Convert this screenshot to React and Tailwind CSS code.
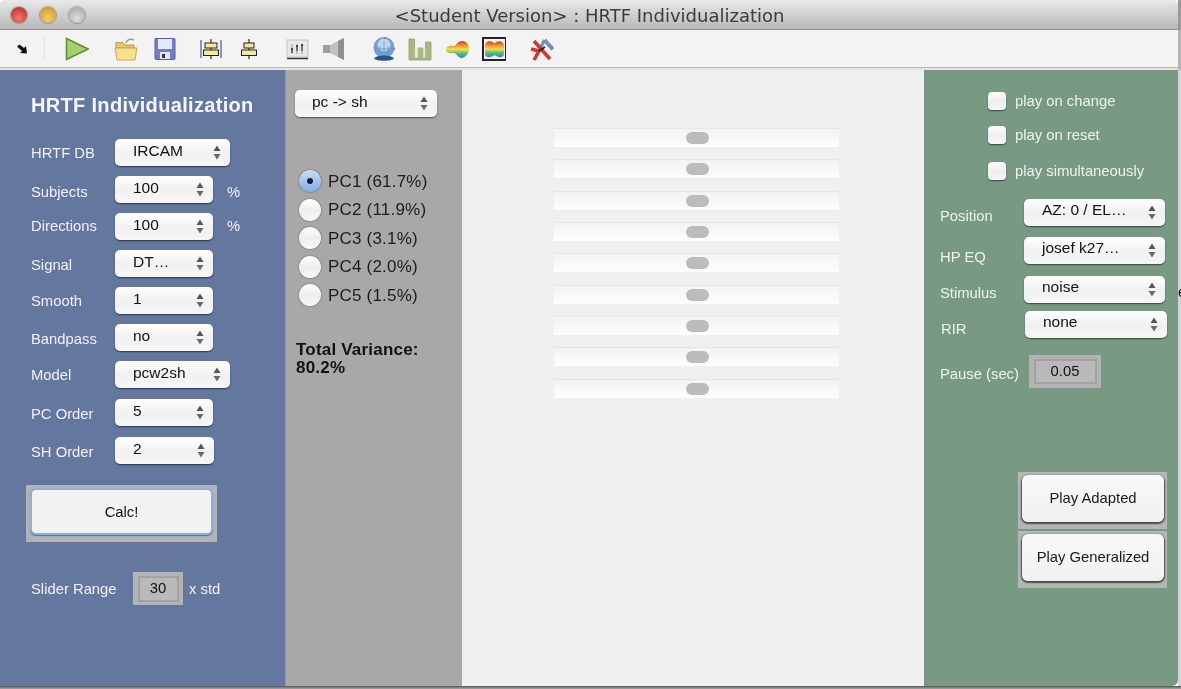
import { useId } from "react";

const FONT = "font-['Liberation_Sans',Arial,sans-serif]";

function Arrows() {
  return (
    <svg width="8" height="15" viewBox="0 0 8 15" className="shrink-0">
      <path d="M4 0.5 L7.5 6 H0.5 Z" fill="#555" />
      <path d="M4 14.5 L7.5 9 H0.5 Z" fill="#6a6a6a" />
    </svg>
  );
}

function Dropdown({ value, className = "w-[98px]", textClass = "pl-[18px]" }) {
  return (
    <div
      className={`h-[27px] rounded-[5px] bg-gradient-to-b from-white via-[#f1f1f1] to-[#f6f6f6] shadow-[0_1px_1.5px_rgba(0,0,0,0.55)] flex items-center justify-between pr-[9px] shrink-0 ${className}`}
    >
      <span className={`text-[15.5px] leading-none text-[#111] -mt-[3px] ${textClass}`}>{value}</span>
      <Arrows />
    </div>
  );
}

function Row({ label, value, width = "w-[98px]", suffix, labelClass = "", suffixClass = "" }) {
  return (
    <div className="flex items-center h-[27px]">
      <span className={`w-[84px] text-[14.8px] text-[#f0f2f6] ${labelClass}`}>{label}</span>
      <Dropdown value={value} className={width} />
      {suffix && <span className={`ml-[14px] text-[14.8px] text-[#f0f2f6] ${suffixClass}`}>{suffix}</span>}
    </div>
  );
}

function Radio({ label, checked }) {
  return (
    <div className="flex items-center h-[28.5px]">
      <span
        className={`w-[22px] h-[22px] rounded-full flex items-center justify-center shadow-[0_0_1.5px_rgba(0,0,0,0.7)] ${
          checked ? "bg-gradient-to-b from-[#c9dcf5] to-[#80aee6]" : "bg-gradient-to-b from-white via-[#ededed] to-[#fafafa]"
        }`}
      >
        {checked && <span className="w-[6px] h-[6px] rounded-full bg-[#10203a]" />}
      </span>
      <span className="ml-[7px] text-[17px] text-[#1c1c1c] tracking-[0.2px]">{label}</span>
    </div>
  );
}

function Check({ label }) {
  return (
    <div className="flex items-center h-[18px] pl-[64px]">
      <span className="w-[18px] h-[18px] rounded-[4px] bg-gradient-to-b from-white via-[#eeeeee] to-[#f8f8f8] shadow-[0_1px_1.5px_rgba(0,0,0,0.55)]" />
      <span className="ml-[9px] text-[14.8px] text-[#eef2ee]">{label}</span>
    </div>
  );
}

function PushButton({ label }) {
  return (
    <div className="w-[149px] h-[57px] bg-[#b4b8b4] pt-[3px] pl-[4px]">
      <button className="w-[142px] h-[47px] rounded-[6px] bg-gradient-to-b from-[#f8f8f8] to-[#f1f1f1] text-[14.8px] text-[#1a1a1a] shadow-[0_1px_1.5px_1px_rgba(0,0,0,0.6)]">
        {label}
      </button>
    </div>
  );
}

function NumBox({ value, outer, inner }) {
  return (
    <div className={`bg-[#b3b3b3] flex items-center justify-center shrink-0 ${outer}`}>
      <div className={`bg-[#b9b9b9] border-2 border-[#a2a2a2] flex items-center justify-center text-[14.8px] text-[#111] ${inner}`}>
        {value}
      </div>
    </div>
  );
}

function SliderRow() {
  return (
    <div className="h-[19px] border-t border-[#e6e6e6] bg-gradient-to-b from-[#f3f3f3] to-[#fdfdfd] flex items-center justify-center pl-[1px]">
      <span className="w-[23px] h-[12px] rounded-full bg-[#bcbcbc]" />
    </div>
  );
}

function Light({ className }) {
  return (
    <span className={`w-[16px] h-[16px] rounded-full shadow-[0_0_1px_1px_rgba(0,0,0,0.25)] ${className}`} />
  );
}

function Icon({ children, ml }) {
  return (
    <svg width="24" height="24" viewBox="0 0 24 24" className={`shrink-0 ${ml}`}>
      {children}
    </svg>
  );
}

function Rainbow({ id }) {
  return (
    <defs>
      <linearGradient id={id} x1="0" y1="0" x2="0" y2="1">
        <stop offset="0" stopColor="#d8342a" />
        <stop offset="0.3" stopColor="#f3a12c" />
        <stop offset="0.5" stopColor="#efe04a" />
        <stop offset="0.72" stopColor="#55c27a" />
        <stop offset="1" stopColor="#3f79d8" />
      </linearGradient>
    </defs>
  );
}

function Blob() {
  const id = useId();
  return (
    <>
      <Rainbow id={id} />
      <path d="M1 12.5 C1 9 5 8 8.5 9 C11 9.5 12 4 17 4 C22 4 24 8.5 24 12 C24 16.5 20 21 16.5 21 C13 21 11.5 16 8.5 16 C5 16.5 1 16 1 12.5 Z" fill={`url(#${id})`} />
    </>
  );
}

function FramedBlob() {
  const id = useId();
  return (
    <>
      <Rainbow id={id} />
      <rect x="1" y="1" width="23" height="22" fill="#f2f2f2" stroke="#222" strokeWidth="2" />
      <path d="M3 9 C3 3 10 3 12.5 6.5 C15 3 22 3 22 9 V17 C22 21 16 21 12.5 18 C9 21 3 21 3 17 Z" fill={`url(#${id})`} />
    </>
  );
}

function Toolbar() {
  return (
    <div className="h-[38px] bg-[#f3f3f3] border-b border-[#b9b9b9] flex items-center pl-[10px] shrink-0">
      {/* arrow */}
      <Icon>
        <path d="M7 9.5 L9.5 7.5 L14 11 L16 9 L17 16.5 L10 16 L12 14 Z" fill="#111" />
      </Icon>
      <span className="ml-[10px] w-px h-[24px] bg-[#e2e2e2]" />
      {/* run */}
      <Icon ml="ml-[20px]">
        <path d="M1.5 1.5 L23 12 L1.5 22.5 Z" fill="#a6cf72" stroke="#5c9230" strokeWidth="1.6" />
      </Icon>
      {/* open */}
      <Icon ml="ml-[25px]">
        <path d="M12 6 C13 2 17 1.5 20 3" fill="none" stroke="#8b9bb0" strokeWidth="1.5" />
        <path d="M2 10 V5.5 H9 L11 8 H20 V11 H2 Z" fill="#e8c566" stroke="#c29e45" />
        <path d="M1 11 H23 L21 23 H3 Z" fill="#f6df8e" stroke="#c9a84f" />
      </Icon>
      {/* save */}
      <Icon ml="ml-[15px]">
        <rect x="2" y="1.5" width="20" height="21" rx="1" fill="#737cc9" stroke="#5361a3" />
        <rect x="5" y="2" width="14" height="10" fill="#e4e7f6" />
        <rect x="7" y="15" width="10" height="7" fill="#e5e5ea" />
        <rect x="9" y="17" width="3" height="4" fill="#333" />
      </Icon>
      {/* align distribute */}
      <Icon ml="ml-[22px]">
        <path d="M2 3 V21 M22 3 V21" stroke="#5d7290" strokeWidth="1.4" />
        <path d="M12 2 V22" stroke="#333" strokeWidth="1.2" />
        <rect x="6" y="6" width="12" height="5" fill="#f5ea9a" stroke="#222" />
        <rect x="4.5" y="13" width="15" height="5.5" fill="#f5ea9a" stroke="#222" />
      </Icon>
      {/* align center */}
      <Icon ml="ml-[14px]">
        <path d="M12 2 V22" stroke="#333" strokeWidth="1.2" />
        <rect x="7" y="6" width="10" height="5" fill="#f5ea9a" stroke="#222" />
        <rect x="4.5" y="13" width="15" height="5.5" fill="#f5ea9a" stroke="#222" />
      </Icon>
      {/* mixer */}
      <Icon ml="ml-[24px]">
        <rect x="2" y="3" width="21" height="17" fill="#e8e8e4" stroke="#c4c4bf" />
        <path d="M2 21.5 H23" stroke="#333" strokeWidth="1.4" />
        <path d="M7 7 V17 M12 7 V17 M17 7 V17" stroke="#888" strokeWidth="0.8" />
        <path d="M6 12 h2 M11 9 h2 M16 8 h2" stroke="#222" strokeWidth="1.6" />
        <path d="M7 12 V16 M12 9 V14 M17 8 V14" stroke="#222" strokeWidth="1" />
      </Icon>
      {/* speaker */}
      <Icon ml="ml-[13px]">
        <path d="M1 8 H8 L22 1 V23 L8 16 H1 Z" fill="#c2c2c2" />
        <path d="M16 4 L22 1 V23 L16 20 Z" fill="#8f8f8f" />
        <path d="M1 8 H8 V16 H1 Z" fill="#9f9f9f" />
      </Icon>
      {/* globe */}
      <Icon ml="ml-[26px]">
        <circle cx="12" cy="10.5" r="10.5" fill="#6f9fd2" />
        <circle cx="12" cy="8" r="6.5" fill="#bcd5ee" />
        <path d="M12 4 V18 M7 12 H17 M8 9 V17 M16 9 V17" stroke="#6f92b8" strokeWidth="0.8" />
        <path d="M2 21.5 C4 17.5 20 17.5 22 21.5 C20 24.5 4 24.5 2 21.5 Z" fill="#26588f" />
        <circle cx="13" cy="1" r="1" fill="#d9534f" />
        <circle cx="22" cy="12" r="1" fill="#d9534f" />
      </Icon>
      {/* bars */}
      <Icon ml="ml-[12px]">
        <path d="M1 2 H6.5 V21 H10 V11 H15 V21 H17.5 V5 H23 V23 H1 Z" fill="#a7b884" stroke="#8fa46a" strokeWidth="0.8" />
        <path d="M6.5 21 H17.5 V11 H6.5 Z" fill="#dfe6cc" fillOpacity="0.6" />
        <path d="M10 21 V11 H15 V21 Z" fill="#a7b884" />
      </Icon>
      {/* surface */}
      <Icon ml="ml-[13px]">
        <Blob />
      </Icon>
      {/* framed surface */}
      <Icon ml="ml-[13px]">
        <FramedBlob />
      </Icon>
      {/* network */}
      <Icon ml="ml-[24px]">
        <path d="M14.5 3 L23 12.5" stroke="#6f93bd" strokeWidth="4" fill="none" />
        <path d="M14.5 3 L9 14" stroke="#6f93bd" strokeWidth="3.4" fill="none" />
        <path d="M4 4 L20 22" stroke="#cc3a30" strokeWidth="3.6" fill="none" />
        <path d="M1 12 L9 14 L4 23" stroke="#cc3a30" strokeWidth="3.6" fill="none" />
        <path d="M9 14 L15 10" stroke="#222" strokeWidth="1.6" />
      </Icon>
    </div>
  );
}

function App() {
  return (
    <div className={`w-[1181px] h-[689px] overflow-hidden bg-white blur-[0.4px] ${FONT}`}>
      <div className="flex h-[686px]">
        <div className="w-[1178px] flex flex-col overflow-hidden rounded-tl-[5px] rounded-tr-[5px] rounded-br-[6px] bg-[#f3f3f3] shrink-0">
          {/* Title bar */}
          <div className="h-[30px] bg-gradient-to-b from-[#e9e9e9] to-[#b8b8b8] border-b border-[#8f8f8f] relative flex items-center justify-center shrink-0">
            <div className="absolute left-[11px] top-[7px] flex gap-[13px]">
              <Light className="bg-[radial-gradient(circle_at_50%_70%,#f47a70,#b3221f)]" />
              <Light className="bg-[radial-gradient(circle_at_50%_70%,#f7cf6e,#c48a1d)]" />
              <Light className="bg-[radial-gradient(circle_at_50%_70%,#dedede,#a0a0a0)]" />
            </div>
            <span className="font-['DejaVu_Sans',sans-serif] text-[18px] text-[#3b3b3b] ml-[1px] mt-[1px]">
              &lt;Student Version&gt; : HRTF Individualization
            </span>
          </div>

          <Toolbar />

          <div className="h-[2px] bg-[#e4e4e4] shrink-0" />

          <div className="flex flex-1 min-h-0">
            {/* Left panel */}
            <div className="w-[285px] bg-[#64779f] pl-[31px] pt-[22px] flex flex-col shrink-0">
              <h1 className="text-[20px] leading-[26px] font-bold text-[#f4f6fa] tracking-[0.32px] whitespace-nowrap">
                HRTF Individualization
              </h1>
              <div className="flex flex-col gap-[10px] mt-[21px]">
                <Row label="HRTF DB" value="IRCAM" width="w-[115px]" labelClass="mt-[2px]" />
                <Row label="Subjects" value="100" suffix="%" labelClass="mt-[5px]" suffixClass="mt-[5px]" />
                <Row label="Directions" value="100" suffix="%" labelClass="-mt-[1px]" suffixClass="-mt-[1px]" />
                <Row label="Signal" value="DT…" labelClass="mt-[4px]" />
                <Row label="Smooth" value="1" labelClass="mt-[2px]" />
                <Row label="Bandpass" value="no" labelClass="mt-[4px]" />
                <Row label="Model" value="pcw2sh" width="w-[115px]" labelClass="mt-[2px]" />
                <div className="mt-[1px]">
                  <Row label="PC Order" value="5" labelClass="mt-[4px]" />
                </div>
                <div className="mt-[1px]">
                  <Row label="SH Order" value="2" width="w-[99px]" labelClass="mt-[4px]" />
                </div>
              </div>
              <div className="-ml-[5px] mt-[21px] w-[191px] h-[57px] bg-[#b1b3b6] pt-[3px] pl-[4px]">
                <button className="w-[183px] h-[47px] pt-[2px] rounded-[6px] bg-[#f2f2f2] text-[14.8px] text-[#111] border-2 border-[#8db0de] shadow-[0_1px_1px_rgba(60,80,120,0.7)]">
                  Calc!
                </button>
              </div>
              <div className="flex items-center h-[33px] mt-[30px]">
                <span className="w-[102px] text-[14.8px] text-[#f0f2f6] mt-[2px]">Slider Range</span>
                <NumBox value="30" outer="w-[50px] h-[33px]" inner="w-[41px] h-[26px]" />
                <span className="ml-[6px] text-[14.8px] text-[#f0f2f6] mt-[2px]">x std</span>
              </div>
            </div>

            {/* Middle panel */}
            <div className="w-[177px] bg-[#a8a8a8] border-l border-[#8f9cb8] flex flex-col shrink-0">
              <div className="pl-[9px] pt-[20px]">
                <Dropdown value="pc -> sh" className="w-[142px]" textClass="pl-[17px]" />
              </div>
              <div className="flex flex-col pl-[13px] mt-[50px]">
                <Radio label="PC1 (61.7%)" checked />
                <Radio label="PC2 (11.9%)" />
                <Radio label="PC3 (3.1%)" />
                <Radio label="PC4 (2.0%)" />
                <Radio label="PC5 (1.5%)" />
              </div>
              <p className="pl-[10px] mt-[31px] text-[17px] leading-[18px] font-bold text-[#111] tracking-[0.2px]">
                Total Variance:
                <br />
                80.2%
              </p>
            </div>

            {/* Sliders */}
            <div className="flex-1 bg-[#f0f0f0] pt-[58px] pl-[92px] pr-[85px]">
              <div className="flex flex-col gap-[12.33px]">
                {[0, 1, 2, 3, 4, 5, 6, 7, 8].map((i) => (
                  <SliderRow key={i} />
                ))}
              </div>
            </div>

            {/* Right panel */}
            <div className="w-[254px] bg-[#789a85] flex flex-col shrink-0">
              <div className="flex flex-col pt-[22px]">
                <Check label="play on change" />
                <div className="mt-[16px]">
                  <Check label="play on reset" />
                </div>
                <div className="mt-[18px]">
                  <Check label="play simultaneously" />
                </div>
              </div>
              <div className="flex flex-col gap-[10px] mt-[19px] pl-[16px]">
                <div className="flex items-center h-[27px]">
                  <span className="w-[84px] text-[14.8px] text-[#eef2ee] mt-[7px]">Position</span>
                  <Dropdown value="AZ: 0 / EL…" className="w-[141px]" textClass="pl-[18px] pb-[2px]" />
                </div>
                <div className="flex items-center h-[27px] mt-[1px]">
                  <span className="w-[84px] text-[14.8px] text-[#eef2ee] mt-[13px]">HP EQ</span>
                  <Dropdown value="josef k27…" className="w-[141px]" textClass="pl-[18px] pb-[2px]" />
                </div>
                <div className="flex items-center h-[27px] mt-[2px]">
                  <span className="w-[84px] text-[14.8px] text-[#eef2ee] mt-[8px]">Stimulus</span>
                  <Dropdown value="noise" className="w-[141px]" textClass="pl-[18px] pb-[2px]" />
                </div>
                <div className="flex items-center h-[27px] -mt-[2px]">
                  <span className="w-[85px] pl-[1px] text-[14.8px] text-[#eef2ee] mt-[10px]">RIR</span>
                  <Dropdown value="none" className="w-[142px]" textClass="pl-[18px] pb-[2px]" />
                </div>
              </div>
              <div className="flex items-center h-[33px] mt-[17px] pl-[16px]">
                <span className="w-[89px] text-[14.8px] text-[#eef2ee] mt-[6px]">Pause (sec)</span>
                <NumBox value="0.05" outer="w-[72px] h-[33px]" inner="w-[63px] h-[25px]" />
              </div>
              <div className="flex flex-col gap-[2px] mt-[84px] ml-[94px]">
                <PushButton label="Play Adapted" />
                <PushButton label="Play Generalized" />
              </div>
            </div>
          </div>
        </div>

        {/* Edge of the window behind */}
        <div className="flex-1 flex flex-col overflow-hidden">
          <div className="h-[30px] bg-[#9a9a9a] shrink-0" />
          <div className="h-[40px] bg-[#b4b4b4] shrink-0" />
          <div className="flex-1 bg-[#d4d4d4] pt-[214px] text-[14px] leading-[16px] text-[#111]">e</div>
        </div>
      </div>
      <div className="h-[3px] bg-gradient-to-b from-[#555] to-[#aaa]" />
    </div>
  );
}

export default App;
